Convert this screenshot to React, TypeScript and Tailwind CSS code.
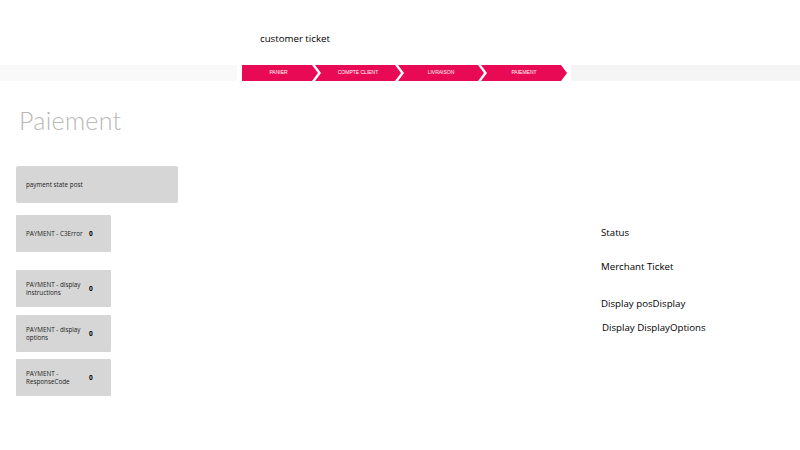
const steps = ['PANIER', 'COMPTE CLIENT', 'LIVRAISON', 'PAIEMENT'];

const tiles = [
  { label: 'PAYMENT - C3Error', className: 'mt-3' },
  { label: 'PAYMENT - display instructions', className: 'mt-[18px]' },
  { label: 'PAYMENT - display options', className: 'mt-2' },
  { label: 'PAYMENT - ResponseCode', className: 'mt-[7px]' },
];

export default function App() {
  return (
    <div className="w-[800px] h-[450px] overflow-hidden bg-white font-['Open_Sans',sans-serif] text-black">
      {/* Header */}
      <div className="h-[65px] pl-[260px] pt-[31px] text-[9.7px] leading-[16px]">customer ticket</div>

      {/* Steps */}
      <div className="flex h-4">
        <div className="w-[237px] bg-[#f9f9f9]" />
        <div className="flex ml-[5px] mr-[4px]">
          {steps.map((step, i) => (
            <div
              key={step}
              className={`h-4 flex items-center justify-center bg-[#e90a55] text-white text-[5px] font-['Liberation_Sans',sans-serif] ${
                i === 0
                  ? 'w-[76px] pr-[3px] [clip-path:polygon(0_0,calc(100%-6px)_0,100%_50%,calc(100%-6px)_100%,0_100%)]'
                  : 'w-[86px] -ml-[3px] [clip-path:polygon(0_0,calc(100%-6px)_0,100%_50%,calc(100%-6px)_100%,0_100%,6px_50%)]'
              }`}
            >
              {step}
            </div>
          ))}
        </div>
        <div className="flex-1 bg-[#f5f5f5]" />
      </div>

      <div className="flex">
        {/* Left column */}
        <div className="ml-4 w-[162px]">
          <h1 className="pl-[3px] mt-[23px] text-[25px] leading-[32px] font-light text-[#b8b8b8] font-['Lato',sans-serif] tracking-[0.3px]">
            Paiement
          </h1>
          <div className="mt-[30px] h-[37px] flex items-center pl-2.5 bg-[#d6d6d6] rounded-[2px] text-[6.3px] text-[#222]">
            payment state post
          </div>
          {tiles.map((tile) => (
            <div
              key={tile.label}
              className={`w-[95px] h-[37px] flex items-center pl-2.5 bg-[#d6d6d6] rounded-[1px] text-[6.3px] leading-[7.5px] text-[#222] ${tile.className}`}
            >
              <span className="w-[58px]">{tile.label}</span>
              <span className="ml-[5px] font-bold text-[6.5px] text-black">0</span>
            </div>
          ))}
        </div>

        {/* Right column */}
        <div className="ml-[423px] pt-[144px] text-[9.7px] leading-[16px]">
          <div>Status</div>
          <div className="mt-[18px]">Merchant Ticket</div>
          <div className="mt-[21px]">Display posDisplay</div>
          <div className="mt-2 ml-px">Display DisplayOptions</div>
        </div>
      </div>
    </div>
  );
}
